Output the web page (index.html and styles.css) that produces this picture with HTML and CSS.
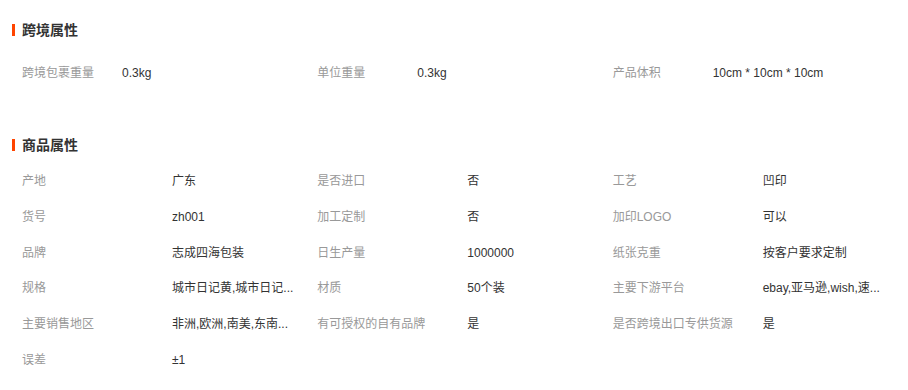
FILE: index.html
```html
<!DOCTYPE html>
<html lang="zh-CN">
<head>
<meta charset="utf-8">
<title>属性</title>
<link rel="stylesheet" href="styles.css">
</head>
<body>
<div class="page">
  <section class="block block-cross">
    <h2 class="title">跨境属性</h2>
    <div class="grid grid-cross">
      <div class="item"><span class="label">跨境包裹重量</span><span class="value">0.3kg</span></div>
      <div class="item"><span class="label">单位重量</span><span class="value">0.3kg</span></div>
      <div class="item"><span class="label">产品体积</span><span class="value">10cm * 10cm * 10cm</span></div>
    </div>
  </section>
  <section class="block block-goods">
    <h2 class="title">商品属性</h2>
    <div class="grid grid-goods">
      <div class="item"><span class="label">产地</span><span class="value">广东</span></div>
      <div class="item"><span class="label">是否进口</span><span class="value">否</span></div>
      <div class="item"><span class="label">工艺</span><span class="value">凹印</span></div>
      <div class="item"><span class="label">货号</span><span class="value">zh001</span></div>
      <div class="item"><span class="label">加工定制</span><span class="value">否</span></div>
      <div class="item"><span class="label">加印LOGO</span><span class="value">可以</span></div>
      <div class="item"><span class="label">品牌</span><span class="value">志成四海包装</span></div>
      <div class="item"><span class="label">日生产量</span><span class="value">1000000</span></div>
      <div class="item"><span class="label">纸张克重</span><span class="value">按客户要求定制</span></div>
      <div class="item"><span class="label">规格</span><span class="value">城市日记黄,城市日记...</span></div>
      <div class="item"><span class="label">材质</span><span class="value">50个装</span></div>
      <div class="item"><span class="label">主要下游平台</span><span class="value">ebay,亚马逊,wish,速...</span></div>
      <div class="item"><span class="label">主要销售地区</span><span class="value">非洲,欧洲,南美,东南...</span></div>
      <div class="item"><span class="label">有可授权的自有品牌</span><span class="value">是</span></div>
      <div class="item"><span class="label">是否跨境出口专供货源</span><span class="value">是</span></div>
      <div class="item"><span class="label">误差</span><span class="value">±1</span></div>
    </div>
  </section>
</div>
</body>
</html>
```
FILE: styles.css
```css
html, body {
  margin: 0;
  padding: 0;
  background: #fff;
}
body {
  font-family: "Liberation Sans", Arial, "Noto Sans CJK SC", sans-serif;
  font-size: 12px;
  color: #333;
}
.page {
  padding: 20px 0 0 12px;
}
.title {
  margin: 0;
  height: 20px;
  line-height: 20px;
  font-size: 14px;
  font-weight: bold;
  color: #333;
  display: flex;
  align-items: center;
}
.title::before {
  content: "";
  width: 3px;
  height: 12px;
  background: #ff4400;
  margin-right: 7px;
}
.grid {
  display: grid;
  grid-template-columns: repeat(3, 1fr);
  padding-left: 10px;
}
.block-cross .grid {
  margin-top: 15px;
}
.block-goods {
  margin-top: 44px;
}
.block-goods .grid {
  margin-top: 9px;
}
.item {
  display: flex;
  height: 36px;
  line-height: 36px;
  min-width: 0;
}
.grid-goods .item {
  height: 35.8px;
  line-height: 35.8px;
}
.label {
  color: #999;
  white-space: nowrap;
  flex: none;
}
.grid-cross .label {
  width: 100px;
}
.grid-goods .label {
  width: 150px;
}
.value {
  color: #333;
  white-space: nowrap;
}
```
